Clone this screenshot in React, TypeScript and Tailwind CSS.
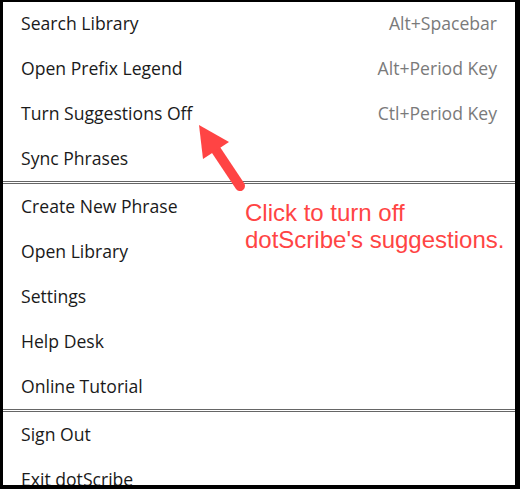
import React from "react";

type Item = { label: string; shortcut?: string };

const groups: Item[][] = [
  [
    { label: "Search Library", shortcut: "Alt+Spacebar" },
    { label: "Open Prefix Legend", shortcut: "Alt+Period Key" },
    { label: "Turn Suggestions Off", shortcut: "Ctl+Period Key" },
    { label: "Sync Phrases" },
  ],
  [
    { label: "Create New Phrase" },
    { label: "Open Library" },
    { label: "Settings" },
    { label: "Help Desk" },
    { label: "Online Tutorial" },
  ],
  [{ label: "Sign Out" }, { label: "Exit dotScribe" }],
];

const MenuRow = ({ item }: { item: Item }) => (
  <div className="flex h-[45px] shrink-0 items-center justify-between pl-[18px] pr-[18px]">
    <span className="text-[#1a1a1a]">{item.label}</span>
    {item.shortcut && <span className="text-[#7a7a7a]">{item.shortcut}</span>}
  </div>
);

const App = () => {
  return (
    <div
      className="relative h-[489px] w-[520px] overflow-hidden border-t-2 border-r-[5px] border-b-4 border-l-[3px] border-black bg-white text-[17.6px]"
      style={{ fontFamily: '"Open Sans", "Noto Sans", sans-serif' }}
    >
      <div className="-mt-px flex flex-col">
        {groups.map((group, gi) => (
          <React.Fragment key={gi}>
            {gi > 0 && <div className="h-[3px] shrink-0 border-y border-[#666]" />}
            {group.map((item) => (
              <MenuRow key={item.label} item={item} />
            ))}
          </React.Fragment>
        ))}
      </div>

      {/* callout */}
      <svg className="pointer-events-none absolute left-[-3px] top-[-2px]" width="520" height="489">
        <line x1="216" y1="150" x2="240" y2="186" stroke="#ff4444" strokeWidth="10" strokeLinecap="round" />
        <polygon points="199,125 229,142 203,159" fill="#ff4444" />
      </svg>
      <div
        className="absolute left-[242px] top-[197px] whitespace-nowrap text-[24px] leading-[27px] text-[#ff4444]"
        style={{ fontFamily: '"Liberation Sans", Arial, sans-serif' }}
      >
        Click to turn off
        <br />
        dotScribe's suggestions.
      </div>
    </div>
  );
};

export default App;
